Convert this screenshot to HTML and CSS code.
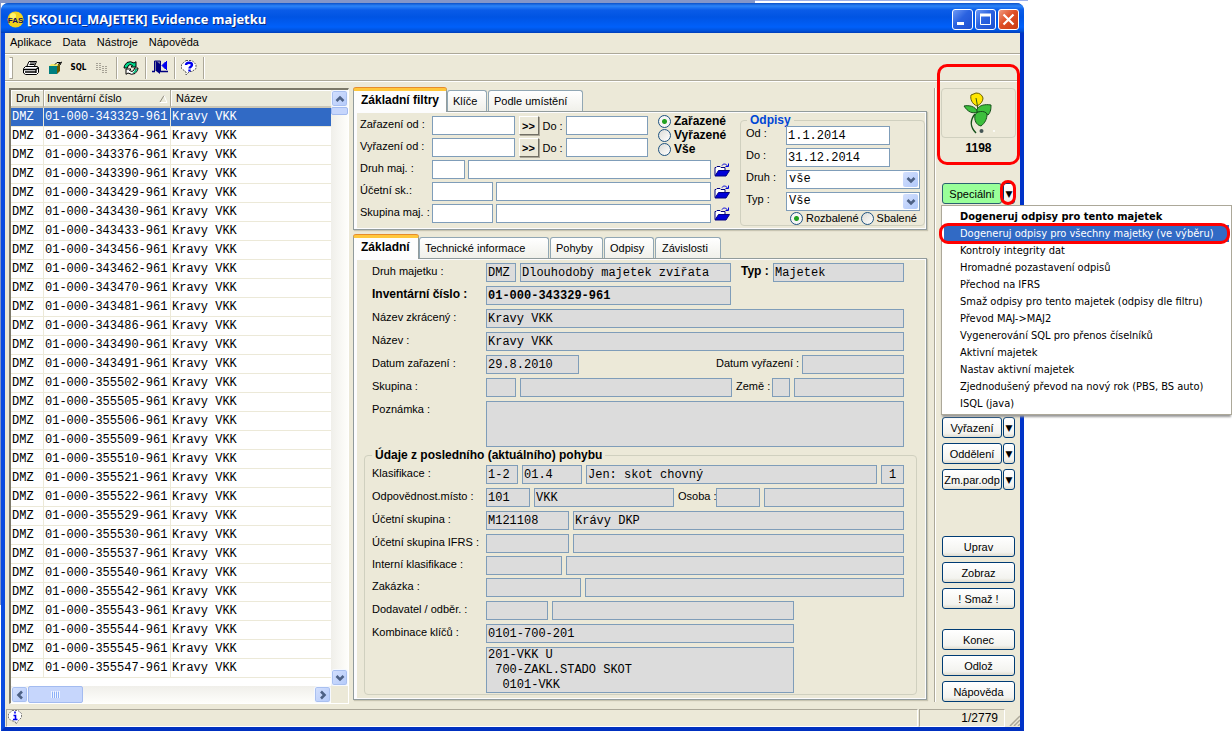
FILE: index.html
```html
<!DOCTYPE html>
<html lang="cs">
<head>
<meta charset="utf-8">
<title>[SKOLICI_MAJETEK] Evidence majetku</title>
<link rel="stylesheet" href="styles.css">
</head>
<body>
<svg class="defs" aria-hidden="true">
  <symbol id="folder" viewBox="0 0 16 14">
    <path d="M1 12.5V4.5h1l1-1h3l1 1h4v3" fill="#fff" stroke="#000080"/>
    <path d="M1 13L4.500 7.500H15.500L12 13Z" fill="#0000d8" stroke="#000080"/>
    <path d="M8 2.500C9 .5 12 .5 13.500 3M14.500 .5V3.500H11.500" fill="none" stroke="#0000d8"/>
  </symbol>
  <symbol id="down" viewBox="0 0 10 8"><path d="M1.500 2L5 5.500L8.500 2" fill="none" stroke="#4d6185" stroke-width="2.600"/></symbol>
</svg>
<div class="window">
  <header class="titlebar">
    <svg class="app-icon" viewBox="0 0 17 17"><circle cx="8.500" cy="8.500" r="8" fill="#f2d21c"/><circle cx="6" cy="5" r="3" fill="#fff36b"/><text x="8.500" y="12" text-anchor="middle" class="app-icon-text">FAS</text></svg>
    <h1>[SKOLICI_MAJETEK] Evidence majetku</h1>
    <button class="win-btn" aria-label="Minimalizovat"><svg viewBox="0 0 21 21"><path d="M5 14.500h7" stroke="#fff" stroke-width="3"/></svg></button>
    <button class="win-btn" aria-label="Maximalizovat"><svg viewBox="0 0 21 21"><path d="M5.500 5v10.500h10V5" fill="none" stroke="#fff"/><path d="M5 6h11" stroke="#fff" stroke-width="3"/></svg></button>
    <button class="win-btn close" aria-label="Zavřít"><svg viewBox="0 0 21 21"><path d="M5.500 5.500l10 10M15.500 5.500l-10 10" stroke="#fff" stroke-width="2.200"/></svg></button>
  </header>
  <nav class="menubar">
    <button>Aplikace</button><button>Data</button><button>Nástroje</button><button>Nápověda</button>
  </nav>
  <div class="toolbar">
    <span class="grip"></span>
    <button aria-label="Tisk"><svg width="18" height="16" viewBox="0 0 18 16"><path d="M5 6L7 1.500h7.500L12.500 6" fill="#fff" stroke="#000"/><path d="M8 3h5M7.500 4.500h5" stroke="#000"/><path d="M3.500 6.500h12l1 1.500v4.500l-2 2h-11L1.500 13V8.500Z" fill="#fff" stroke="#000"/><path d="M2 9.500h12v3.500M14 9.500l2.500-2M3 12h10.500" fill="none" stroke="#000" stroke-width="1.300"/></svg></button>
    <button aria-label="Export"><svg width="14" height="13" viewBox="0 0 14 13"><path d="M1 5L3.500 3H12L9 5Z" fill="#f5e96a"/><path d="M1 5h8v8H1Z" fill="#007f7f"/><path d="M9 5l3-2v7l-3 3Z" fill="#6b5a00"/><path d="M7 3.500l2-2h3M10 3.500L13.500 1 12 4" stroke="#000" fill="none"/></svg></button>
    <button class="sql">SQL</button>
    <button aria-label="Sloupce"><svg width="14" height="12" viewBox="0 0 14 12"><path d="M1 1.500h5M1 3.500h5M1 5.500h5M1 7.500h5M7 4.500h5M7 6.500h5M7 8.500h5M7 10.500h5" stroke="#a6a296"/><path d="M3.500 1v7M9.500 4v7" stroke="#ece9d8"/></svg></button>
    <span class="tsep"></span>
    <button aria-label="Obnovit"><svg width="16" height="14" viewBox="0 0 16 14"><path d="M1 7L1.500 4.500 4 1.500 7.500 .7 11 2 13 .7V6H8L9.500 4.500 7 3.500 5 5 4.500 7Z" fill="#00d58a" stroke="#000"/><path d="M15 7l-.5 2.500L12 12.500l-3.500.8L5 12l-2 1.300V8H8L6.500 9.500 9 10.500 11 9l.5-2Z" fill="#fff" stroke="#000"/><path d="M12 8h2.300l-.8 2.200-2 1.800H9.500L11.500 10Z" fill="#00b878"/></svg></button>
    <span class="tsep"></span>
    <button aria-label="Odejít"><svg width="16" height="15" viewBox="0 0 16 15"><path d="M2.500 11V1h6v10" fill="#8080a0" stroke="#000080"/><path d="M4 1l4 3v10l-4-3Z" fill="#000080"/><path d="M0 11.500h3M8 11.500h8" stroke="#000080" stroke-width="1.400"/><path d="M14.500 1v9M10 5.500l3.500-3.500v7Z" fill="#0000f0" stroke="#0000f0"/></svg></button>
    <span class="tsep"></span>
    <button aria-label="Nápověda"><svg width="16" height="16" viewBox="0 0 16 16"><path d="M5 .5h6l4 4v4l-4 3H8.500L5 15v-3L.5 8.500v-4Z" fill="#fff" stroke="#555" stroke-dasharray="2 1"/><path d="M5 5c0-3 6-3 6 0 0 1.600-2.500 1.800-2.500 3.500M8.500 9.500v2" fill="none" stroke="#0000f0" stroke-width="2.400"/></svg></button>
    <span class="tsep"></span>
  </div>

  <main class="main">
    <section class="list">
      <div class="rows">
        <table>
          <colgroup><col class="c-druh"><col class="c-inv"><col></colgroup>
          <thead><tr><th>Druh</th><th>Inventární číslo<svg class="sort" viewBox="0 0 9 8"><path d="M1 7L5 .5" stroke="#8c887a"/><path d="M5 .5L8 7.500H1" stroke="#fff" fill="none"/></svg></th><th>Název</th></tr></thead>
          <tbody>
            <tr class="selected"><td>DMZ</td><td>01-000-343329-961</td><td>Kravy VKK</td></tr>
            <tr><td>DMZ</td><td>01-000-343364-961</td><td>Kravy VKK</td></tr>
            <tr><td>DMZ</td><td>01-000-343376-961</td><td>Kravy VKK</td></tr>
            <tr><td>DMZ</td><td>01-000-343390-961</td><td>Kravy VKK</td></tr>
            <tr><td>DMZ</td><td>01-000-343429-961</td><td>Kravy VKK</td></tr>
            <tr><td>DMZ</td><td>01-000-343430-961</td><td>Kravy VKK</td></tr>
            <tr><td>DMZ</td><td>01-000-343433-961</td><td>Kravy VKK</td></tr>
            <tr><td>DMZ</td><td>01-000-343456-961</td><td>Kravy VKK</td></tr>
            <tr><td>DMZ</td><td>01-000-343462-961</td><td>Kravy VKK</td></tr>
            <tr><td>DMZ</td><td>01-000-343470-961</td><td>Kravy VKK</td></tr>
            <tr><td>DMZ</td><td>01-000-343481-961</td><td>Kravy VKK</td></tr>
            <tr><td>DMZ</td><td>01-000-343486-961</td><td>Kravy VKK</td></tr>
            <tr><td>DMZ</td><td>01-000-343490-961</td><td>Kravy VKK</td></tr>
            <tr><td>DMZ</td><td>01-000-343491-961</td><td>Kravy VKK</td></tr>
            <tr><td>DMZ</td><td>01-000-355502-961</td><td>Kravy VKK</td></tr>
            <tr><td>DMZ</td><td>01-000-355505-961</td><td>Kravy VKK</td></tr>
            <tr><td>DMZ</td><td>01-000-355506-961</td><td>Kravy VKK</td></tr>
            <tr><td>DMZ</td><td>01-000-355509-961</td><td>Kravy VKK</td></tr>
            <tr><td>DMZ</td><td>01-000-355510-961</td><td>Kravy VKK</td></tr>
            <tr><td>DMZ</td><td>01-000-355521-961</td><td>Kravy VKK</td></tr>
            <tr><td>DMZ</td><td>01-000-355522-961</td><td>Kravy VKK</td></tr>
            <tr><td>DMZ</td><td>01-000-355529-961</td><td>Kravy VKK</td></tr>
            <tr><td>DMZ</td><td>01-000-355530-961</td><td>Kravy VKK</td></tr>
            <tr><td>DMZ</td><td>01-000-355537-961</td><td>Kravy VKK</td></tr>
            <tr><td>DMZ</td><td>01-000-355540-961</td><td>Kravy VKK</td></tr>
            <tr><td>DMZ</td><td>01-000-355542-961</td><td>Kravy VKK</td></tr>
            <tr><td>DMZ</td><td>01-000-355543-961</td><td>Kravy VKK</td></tr>
            <tr><td>DMZ</td><td>01-000-355544-961</td><td>Kravy VKK</td></tr>
            <tr><td>DMZ</td><td>01-000-355545-961</td><td>Kravy VKK</td></tr>
            <tr><td>DMZ</td><td>01-000-355547-961</td><td>Kravy VKK</td></tr>
          </tbody>
        </table>
      </div>
      <div class="vscroll">
        <button class="sb" aria-label="Nahoru"><svg class="up" viewBox="0 0 10 8"><use href="#down"/></svg></button>
        <span class="vthumb"></span>
        <button class="sb end" aria-label="Dolů"><svg viewBox="0 0 10 8"><use href="#down"/></svg></button>
      </div>
      <div class="hscroll">
        <button class="sb" aria-label="Vlevo"><svg class="left" viewBox="0 0 10 8"><use href="#down"/></svg></button>
        <span class="hthumb"><svg width="9" height="7" viewBox="0 0 9 7"><path d="M.5 0v7M2.500 0v7M4.500 0v7M6.500 0v7M8.500 0v7" stroke="#eef4fe"/><path d="M1.500 1v6M3.500 1v6M5.500 1v6M7.500 1v6" stroke="#8cb0f8"/></svg></span>
        <button class="sb end" aria-label="Vpravo"><svg class="right" viewBox="0 0 10 8"><use href="#down"/></svg></button>
      </div>
      <div class="corner"></div>
    </section>

    <div class="center">
      <section class="tabpane">
        <div class="tabs" role="tablist">
          <button class="tab active t-filtry" role="tab">Základní filtry</button><button class="tab t-klice" role="tab">Klíče</button><button class="tab t-umisteni" role="tab">Podle umístění</button>
        </div>
        <form class="page filters">
          <div class="filter-left">
            <div class="dates-row">
              <div class="stack grow">
                <div class="row"><label class="flabel" for="zod">Zařazení od :</label><input id="zod" class="w83 grow"><button type="button" class="go" aria-label="Zařazení rozsah">&gt;&gt;</button><label class="do" for="zdo">Do :</label><input id="zdo" class="w83 grow"></div>
                <div class="row"><label class="flabel" for="vod">Vyřazení od :</label><input id="vod" class="w83 grow"><button type="button" class="go" aria-label="Vyřazení rozsah">&gt;&gt;</button><label class="do" for="vdo">Do :</label><input id="vdo" class="w83 grow"></div>
              </div>
              <div class="states">
                <label><input type="radio" name="stav" checked>Zařazené</label>
                <label><input type="radio" name="stav">Vyřazené</label>
                <label><input type="radio" name="stav">Vše</label>
              </div>
            </div>
            <div class="row"><label class="flabel" for="dm">Druh maj. :</label><input id="dm" class="w33"><input class="grow" aria-label="Název druhu"><button type="button" class="pick" aria-label="Vybrat druh"><svg width="16" height="14"><use href="#folder"/></svg></button></div>
            <div class="row"><label class="flabel" for="us">Účetní sk.:</label><input id="us" class="w61"><input class="grow" aria-label="Název účetní skupiny"><button type="button" class="pick" aria-label="Vybrat účetní skupinu"><svg width="16" height="14"><use href="#folder"/></svg></button></div>
            <div class="row"><label class="flabel" for="sm">Skupina maj. :</label><input id="sm" class="w61"><input class="grow" aria-label="Název skupiny"><button type="button" class="pick" aria-label="Vybrat skupinu"><svg width="16" height="14"><use href="#folder"/></svg></button></div>
          </div>
          <fieldset class="group odpisy">
            <legend>Odpisy</legend>
            <div class="row"><label for="ood">Od :</label><input id="ood" class="w104" value="1.1.2014"></div>
            <div class="row"><label for="odo">Do :</label><input id="odo" class="w104" value="31.12.2014"></div>
            <div class="row"><label for="odr">Druh :</label><span class="combo"><select id="odr"><option>vše</option></select><i><svg viewBox="0 0 10 8"><use href="#down"/></svg></i></span></div>
            <div class="row"><label for="oty">Typ :</label><span class="combo"><select id="oty"><option>Vše</option></select><i><svg viewBox="0 0 10 8"><use href="#down"/></svg></i></span></div>
            <div class="views"><label><input type="radio" name="zob" checked>Rozbalené</label><label><input type="radio" name="zob">Sbalené</label></div>
          </fieldset>
        </form>
      </section>

      <section class="tabpane detail-pane">
        <div class="tabs" role="tablist">
          <button class="tab active t-zakladni" role="tab">Základní</button><button class="tab t-tech" role="tab">Technické informace</button><button class="tab t-pohyby" role="tab">Pohyby</button><button class="tab t-odpisy" role="tab">Odpisy</button><button class="tab t-zav" role="tab">Závislosti</button>
        </div>
        <form class="page detail">
          <div class="rows-main">
            <div class="row"><label for="a1">Druh majetku :</label><input readonly id="a1" class="w30" value="DMZ"><input readonly class="grow" aria-label="Název druhu majetku" value="Dlouhodobý majetek zvířata"><label class="mid strong" for="a2">Typ :</label><input readonly id="a2" class="w131" value="Majetek"></div>
            <div class="row"><label class="strong" for="a3">Inventární číslo :</label><input readonly id="a3" class="w245 bold" value="01-000-343329-961"></div>
            <div class="row"><label for="a4">Název zkrácený :</label><input readonly id="a4" class="grow" value="Kravy VKK"></div>
            <div class="row"><label for="a5">Název :</label><input readonly id="a5" class="grow" value="Kravy VKK"></div>
            <div class="row"><label for="a6">Datum zařazení :</label><input readonly id="a6" class="w93" value="29.8.2010"><label class="mid push" for="a7">Datum vyřazení :</label><input readonly id="a7" class="w102"></div>
            <div class="row"><label for="a8">Skupina :</label><input readonly id="a8" class="w30"><input readonly class="grow" aria-label="Název skupiny"><label class="mid near" for="a9">Země :</label><input readonly id="a9" class="w18"><input readonly class="w110" aria-label="Název země"></div>
            <div class="row"><label for="a10">Poznámka :</label><textarea readonly id="a10" class="grow"></textarea></div>
          </div>
          <fieldset class="group last-move">
            <legend>Údaje z posledního (aktuálního) pohybu</legend>
            <div class="row"><label for="b1">Klasifikace :</label><input readonly id="b1" class="w32" value="1-2"><input readonly class="w60" aria-label="Kód" value="01.4"><input readonly class="grow" aria-label="Popis" value="Jen: skot chovný"><input readonly class="w23 mid-text" aria-label="Skupina odpisu" value="1"></div>
            <div class="row"><label for="b2">Odpovědnost.místo :</label><input readonly id="b2" class="w44" value="101"><input readonly class="w142 grow" aria-label="Místo" value="VKK"><label class="mid osoba" for="b3">Osoba :</label><input readonly id="b3" class="w44"><input readonly class="w142 grow" aria-label="Jméno osoby"></div>
            <div class="row"><label for="b4">Účetní skupina :</label><input readonly id="b4" class="w83" value="M121108"><input readonly class="grow" aria-label="Název účetní skupiny" value="Krávy DKP"></div>
            <div class="row"><label for="b5">Účetní skupina IFRS :</label><input readonly id="b5" class="w83"><input readonly class="grow" aria-label="Název skupiny IFRS"></div>
            <div class="row tight"><label for="b6">Interní klasifikace :</label><input readonly id="b6" class="w76"><input readonly class="grow" aria-label="Název interní klasifikace"></div>
            <div class="row tight"><label for="b7">Zakázka :</label><input readonly id="b7" class="w95"><input readonly class="grow" aria-label="Název zakázky"></div>
            <div class="row"><label for="b8">Dodavatel / odběr. :</label><input readonly id="b8" class="w62"><input readonly class="w242" aria-label="Název dodavatele"></div>
            <div class="row"><label for="b9">Kombinace klíčů :</label><input readonly id="b9" class="w308" value="0101-700-201"></div>
            <div class="row"><label for="b10"></label><textarea readonly id="b10" class="w308" aria-label="Rozpis klíčů">201-VKK U
 700-ZAKL.STADO SKOT
  0101-VKK</textarea></div>
          </fieldset>
        </form>
      </section>
    </div>

    <div class="divider"></div>

    <aside class="side">
      <div class="brand">
        <div class="brand-box"><svg width="32" height="44" viewBox="0 0 32 44">
          <path d="M14 15C9 13 7 8 8 4l5-2c4 0 6 2 7 5 0 3-2 6-6 8Z" fill="#ffe600" stroke="#6b6000"/>
          <path d="M13 7l1.500 8v5" fill="none" stroke="#3c5a10"/>
          <path d="M1 15c5-1 11 0 14 6-6 2-10 0-14-6Z" fill="#3cbf3c" stroke="#15501a"/>
          <path d="M14 18c3-4 8-5 14-4 0 3 0 7-3 10-4-2-7-3-11-3Z" fill="#3cbf3c" stroke="#15501a"/>
          <path d="M12 24c1-4 10-5 12-1 0 5-2 9-6 12-5-1-7-6-6-11Z" fill="#3cbf3c" stroke="#15501a"/>
          <path d="M12 23c-5 6-5 13 1 19" fill="none" stroke="#15501a" stroke-width="1.500"/>
          <circle cx="18.500" cy="40" r="2" fill="#455"/><circle cx="31" cy="40" r="1" fill="#fff"/>
        </svg></div>
        <strong>1198</strong>
        <span class="mark mark-brand"></span>
      </div>
      <div class="split special"><button class="btn green">Speciální</button><button class="btn arrow" aria-label="Speciální – nabídka">▼</button><span class="mark mark-arrow"></span>
        <div class="popup" role="menu">
          <button class="strong-item" role="menuitem">Dogeneruj odpisy pro tento majetek</button>
          <button class="hot" role="menuitem">Dogeneruj odpisy pro všechny majetky (ve výběru)<span class="mark mark-item"></span></button>
          <button role="menuitem">Kontroly integrity dat</button>
          <button role="menuitem">Hromadné pozastavení odpisů</button>
          <button role="menuitem">Přechod na IFRS</button>
          <button role="menuitem">Smaž odpisy pro tento majetek (odpisy dle filtru)</button>
          <button role="menuitem">Převod MAJ-&gt;MAJ2</button>
          <button role="menuitem">Vygenerování SQL pro přenos číselníků</button>
          <button role="menuitem">Aktivní majetek</button>
          <button role="menuitem">Nastav aktivní majetek</button>
          <button role="menuitem">Zjednodušený převod na nový rok (PBS, BS auto)</button>
          <button role="menuitem">ISQL (java)</button>
        </div>
      </div>
      <div class="btn-group">
        <div class="split"><button class="btn">Vyřazení</button><button class="btn arrow" aria-label="Vyřazení – nabídka">▼</button></div>
        <div class="split"><button class="btn">Oddělení</button><button class="btn arrow" aria-label="Oddělení – nabídka">▼</button></div>
        <div class="split"><button class="btn">Zm.par.odp</button><button class="btn arrow" aria-label="Změna parametrů – nabídka">▼</button></div>
      </div>
      <div class="btn-group edit-group"><button class="btn">Uprav</button><button class="btn">Zobraz</button><button class="btn">! Smaž !</button></div>
      <div class="btn-group exit-group"><button class="btn">Konec</button><button class="btn">Odlož</button><button class="btn">Nápověda</button></div>
    </aside>
  </main>

  <footer class="statusbar">
    <div class="status-main"><svg width="15" height="15" viewBox="0 0 15 15"><path d="M4 .5h6l3.500 3v4l-3 3L8 14l-1-2.500L3 10.500.5 8V4Z" fill="#fff" stroke="#777" stroke-dasharray="2 1"/><path d="M7 1.500v2M5.500 5.500h2v4M5 9.500h4.500" fill="none" stroke="#0000f0" stroke-width="1.600"/></svg></div>
    <div class="status-count">1/2779</div>
    <svg class="resize" viewBox="0 0 12 12"><path d="M2 12L12 2M6 12l6-6M10 12l2-2" stroke="#aca899" stroke-width="1.500"/></svg>
  </footer>
</div>
</body>
</html>
```
FILE: styles.css
```css
* { box-sizing: border-box; }

body {
  margin: 0;
  min-height: 100vh;
  padding: 3px 208px 21px 1px;
  display: flex;
  font: 11px/14px "Liberation Sans", Arial, sans-serif;
  color: #000;
  background:
    linear-gradient(#8496c8, #8496c8) 0 0 / 755px 3px no-repeat,
    linear-gradient(#9db0e8, #9db0e8) 0 0 / 1028px 1px no-repeat,
    linear-gradient(#8496c8, #8496c8) 0 0 / 1px 605px no-repeat,
    #fff;
}

button, input, select, textarea { font: inherit; color: inherit; margin: 0; border-radius: 0; }
button { border: 0; padding: 0; background: none; white-space: nowrap; }
.defs { position: absolute; width: 0; height: 0; }

.window {
  flex: 1;
  display: flex;
  flex-direction: column;
  min-width: 0;
  border: 4px solid #0a4be0;
  border-top: 0;
  border-right-color: #0033c8;
  border-bottom-color: #0030c0;
  border-radius: 8px 8px 0 0;
  background: #ece9d8;
}

/* Title bar */
.titlebar {
  margin: 0 -4px;
  height: 30px;
  padding: 2px 5px 0 6px;
  display: flex;
  align-items: center;
  gap: 2px;
  border-radius: 7px 7px 0 0;
  background: linear-gradient(#0a50c8, #2c84f8 3px, #0a5ce8 7px, #0054e3 14px, #0060fa 24px, #0050d8 28px, #003cb8);
}
.titlebar h1 {
  flex: 1;
  margin: 0 0 0 1px;
  font: bold 13px/18px "Open Sans", sans-serif;
  color: #fff;
  text-shadow: 1px 1px #0a2a80;
  white-space: nowrap;
}
.app-icon { width: 17px; height: 17px; }
.app-icon-text { font: bold 8px "Liberation Sans", sans-serif; fill: #101060; }
.win-btn {
  width: 21px;
  height: 21px;
  border: 1px solid #fff;
  border-radius: 3px;
  background: linear-gradient(135deg, #6f9af5, #2a62e0 45%, #1d4fd0);
}
.win-btn svg { display: block; margin: -1px; width: 21px; height: 21px; }
.win-btn.close { background: linear-gradient(135deg, #f09a80, #df4f26 45%, #c83c14); }

/* Menu and toolbar */
.menubar { display: flex; gap: 11px; height: 21px; padding: 0 5px 2px; border-bottom: 1px solid #aca899; }
.toolbar { display: flex; align-items: center; height: 27px; padding-left: 4px; border-top: 1px solid #fff; border-bottom: 1px solid #aca899; }
.toolbar button { height: 22px; display: flex; align-items: center; justify-content: center; width: 24px; }
.toolbar button svg { display: block; }
.toolbar .sql { width: 23px; font: bold 8px/10px "DejaVu Sans Condensed", sans-serif; }
.grip { width: 4px; height: 22px; margin-right: 6px; border: 1px solid #aca899; border-left-color: #fff; background: #fff; }
.tsep { width: 2px; height: 22px; margin: 0 1px 0 2px; border-left: 1px solid #aca899; border-right: 1px solid #fff; }

/* Main area */
.main { flex: 1; display: flex; padding: 6px 5px 5px 4px; border-top: 1px solid #fff; }
.center { flex: 1; min-width: 0; margin: 0 7px 0 4px; display: flex; flex-direction: column; gap: 5px; padding-bottom: 4px; }
.divider { width: 2px; margin: 0 6px 2px 0; border-left: 1px solid #aca899; border-right: 1px solid #fff; }

/* Asset list */
.list {
  width: 340px;
  display: grid;
  grid-template: 1fr 17px / 1fr 17px;
  border: 1px solid #fff;
  border-top: 2px solid #7c796a;
  border-left: 2px solid #7c796a;
  background: #ece9d8;
}
.rows { background: #fff; overflow: hidden; }
.rows table { width: 100%; border-collapse: separate; border-spacing: 0; table-layout: fixed; }
.c-druh { width: 33px; }
.c-inv { width: 127px; }
.rows th {
  height: 18px;
  padding: 0 3px;
  font-weight: normal;
  text-align: left;
  background: #ebeadb;
  border-right: 1px solid #aca899;
  border-bottom: 2px solid #cbc7b8;
  box-shadow: inset 1px 1px #fff;
  position: relative;
  white-space: nowrap;
}
.rows th:first-child { padding-left: 5px; }
.rows th:last-child { border-right: 0; padding-left: 5px; }
.sort { position: absolute; right: 2px; top: 5px; width: 9px; height: 8px; }
.rows td {
  height: 19px;
  padding: 0 0 0 1px;
  font: 12px/16px "Liberation Mono", "Courier New", monospace;
  border-right: 1px solid #ece9d8;
  border-bottom: 1px solid #ece9d8;
  white-space: nowrap;
}
.rows td:last-child { border-right: 0; }
.selected td { background: #316ac5; color: #fff; }
.vscroll { display: flex; flex-direction: column; background: linear-gradient(90deg, #f0efea, #fefefb); }
.hscroll { display: flex; background: linear-gradient(#f0efea, #fefefb); }
.sb {
  width: 17px;
  height: 17px;
  flex: none;
  display: grid;
  place-items: center;
  border: 1px solid #f6f9ff;
  border-radius: 3px;
  background: linear-gradient(135deg, #d4e0fd, #b4cafa);
  box-shadow: inset 0 0 0 1px #a9c0f0;
}
.sb svg { width: 10px; height: 8px; display: block; }
.sb.end { margin-top: auto; }
.hscroll .sb.end { margin: 0 0 0 auto; }
.up { transform: rotate(180deg); }
.left { transform: rotate(90deg); }
.right { transform: rotate(-90deg); }
.vthumb { height: 8px; border: 1px solid #a3bbf0; border-radius: 2px; background: #c6d6fc; }
.hthumb { width: 55px; display: grid; place-items: center; border: 1px solid #a3bbf0; border-radius: 2px; background: #c6d6fc; }

/* Tab panes */
.tabpane { display: flex; flex-direction: column; }
.detail-pane { flex: 1; }
.tabs { display: flex; align-items: flex-end; height: 23px; }
.tab {
  height: 21px;
  margin-right: 1px;
  padding-left: 5px;
  text-align: left;
  border: 1px solid #91a7b4;
  border-bottom: 0;
  border-radius: 3px 3px 0 0;
  background: linear-gradient(#fff, #f0f0ea);
}
.tab.active {
  height: 24px;
  margin: 0 0 -1px;
  padding: 0 0 3px 7px;
  border: 1px solid #919b9c;
  border-top: 3px solid #ffc73c;
  border-bottom: 0;
  background: #fdfdfd;
  font-weight: bold;
  font-size: 12px;
  position: relative;
  box-shadow: 0 -1px #e68b2c;
}
.t-filtry { width: 94px; }
.t-klice { width: 40px; }
.t-umisteni { width: 95px; }
.t-zakladni { width: 66px; }
.t-tech { width: 130px; }
.t-pohyby { width: 53px; }
.t-odpisy { width: 50px; }
.t-zav { width: 66px; padding-left: 6px; }
.page {
  border: 1px solid #919b9c;
  outline: 0;
  box-shadow: inset 0 0 0 1px #fcfcfe, inset 3px 0 #fcfcfe, 1px 1px 1px #c8c5b2;
}
.row { display: flex; gap: 4px; align-items: flex-start; }
.grow { flex: 1 1 0; min-width: 0; }
input:not([type]), textarea, select {
  height: 19px;
  padding: 0 1px;
  border: 1px solid #7f9db9;
  background: #fff;
  font: 12px/15px "Liberation Mono", "Courier New", monospace;
}
input[readonly], textarea[readonly] { background: #dcdcdc; }
textarea { height: 46px; resize: none; overflow: hidden; display: block; }
.strong { font-weight: bold; font-size: 12px; }
input.bold { font-weight: bold; }
input.mid-text { text-align: center; }

.w18 { width: 18px; } .w23 { width: 23px; } .w30 { width: 30px; } .w32 { width: 32px; }
.w33 { width: 33px; } .w44 { width: 44px; } .w60 { width: 60px; } .w61 { width: 61px; }
.w62 { width: 62px; } .w76 { width: 76px; } .w83 { width: 83px; } .w93 { width: 93px; }
.w95 { width: 95px; } .w102 { width: 102px; } .w104 { width: 104px; } .w110 { width: 110px; }
.w131 { width: 131px; } .w142 { width: 142px; } .w242 { width: 242px; } .w245 { width: 245px; }
.w308 { width: 308px; }

input[type="radio"] {
  appearance: none;
  flex: none;
  width: 13px;
  height: 13px;
  margin: 0 3px 0 0;
  border: 1px solid #1d5281;
  border-radius: 50%;
  background: linear-gradient(135deg, #dcdcd7, #fff);
}
input[type="radio"]:checked { background: radial-gradient(circle, #21a121 0 2px, #f6f6f4 3px); }

/* Filters */
.filters { display: flex; padding: 4px 1px 3px 6px; }
.filter-left { flex: 1; display: flex; flex-direction: column; gap: 3px; min-width: 0; }
.filter-left .row { gap: 3px; }
.stack { display: flex; flex-direction: column; gap: 3px; }
.flabel { width: 69px; flex: none; padding-top: 1px; white-space: nowrap; }
.go {
  width: 20px;
  height: 19px;
  margin: 0 1px;
  font-weight: bold;
  background: #ece9d8;
  border: 1px solid #fff;
  border-right: 1px solid #716f64;
  border-bottom: 1px solid #716f64;
  box-shadow: 1px 1px #aca899;
}
.do { width: 20px; padding-top: 3px; white-space: nowrap; }
.dates-row { display: flex; gap: 10px; }
.states { width: 82px; margin: -2px 0; display: flex; flex-direction: column; }
.states label { display: flex; align-items: center; font-weight: bold; font-size: 12px; }
.pick { width: 16px; height: 19px; margin-right: 10px; }
.pick svg { display: block; }

.group { margin: 0; padding: 0; border: 1px solid #d0d0bf; border-radius: 4px; min-width: 0; }
.group legend { font-weight: bold; font-size: 12px; line-height: 14px; padding: 0 3px; }
.odpisy { width: 185px; margin-top: -2px; padding: 0 5px; }
.odpisy legend { margin-left: 1px; color: #0046d5; line-height: 12px; }
.odpisy .row { gap: 0; margin-bottom: 3px; }
.odpisy .row label { width: 40px; }
.combo { flex: 1; position: relative; display: block; height: 19px; margin-right: -1px; }
.combo select { width: 100%; appearance: none; padding: 0 2px; display: block; }
.combo i {
  position: absolute;
  right: 2px;
  top: 2px;
  width: 15px;
  height: 15px;
  display: grid;
  place-items: center;
  border-radius: 2px;
  background: linear-gradient(135deg, #d4e0fd, #b0c8fa);
  pointer-events: none;
}
.combo svg { width: 10px; height: 8px; }
.views { display: flex; gap: 2px; margin-top: -2px; padding-left: 44px; line-height: 13px; }
.views label { display: flex; align-items: center; white-space: nowrap; }

/* Detail */
.detail { flex: 1; padding: 4px 9px 4px 10px; }
.rows-main { padding: 0 13px 0 8px; }
.detail .row { margin-top: 4px; }
.detail .row.tight { margin-top: 3px; }
.detail .rows-main .row:first-child { margin-top: 0; }
.detail label { width: 110px; flex: none; padding-top: 1px; white-space: nowrap; }
.detail .mid { width: 34px; padding-left: 6px; }
.detail .mid.push { width: 82px; margin-left: auto; padding-left: 0; }
.detail .mid.near { width: 32px; padding-left: 0; }
.detail .mid.osoba { width: 34px; padding-left: 0; }
.last-move { margin-top: 1px; padding: 0 12px 1px 7px; }
.last-move legend { margin-left: 0; }
.last-move .row:nth-child(2) { margin-top: 3px; }

/* Right-hand buttons */
.side { width: 73px; flex: none; display: flex; flex-direction: column; }
.brand { position: relative; height: 76px; margin-bottom: 19px; display: flex; flex-direction: column; align-items: center; }
.brand-box { align-self: stretch; height: 50px; margin: 0 -1px 3px; display: grid; place-items: center; border: 1px solid #d0d0bf; border-radius: 4px; }
.brand-box svg { display: block; }
.brand strong { font: bold 12px/14px "Liberation Sans", Arial, sans-serif; }
.split { position: relative; display: flex; gap: 1px; }
.btn {
  flex: 1;
  min-height: 21px;
  border: 1px solid #003c74;
  border-radius: 3px;
  background: linear-gradient(#fff, #f3f3ef 80%, #e0ddd0);
}
.btn.green { background: #99ff99; border-color: #2a6070; }
.btn.arrow { flex: none; width: 12px; font: 9px/10px "DejaVu Sans", sans-serif; text-align: center; }
.btn-group { display: flex; flex-direction: column; gap: 5px; }
.special { margin-bottom: 213px; }
.edit-group { margin-top: 46px; }
.exit-group { margin-top: 20px; }

.mark { position: absolute; border: 3px solid #f00; pointer-events: none; }
.mark-brand { inset: -24px -5px -1px; border-radius: 10px; }
.mark-arrow { top: -3px; right: -1px; width: 16px; height: 25px; border-radius: 8px; }
.mark-item { inset: -2px -1px -2px -5px; border-radius: 9px; }

.popup {
  position: absolute;
  z-index: 2;
  left: -1px;
  top: 22px;
  width: 291px;
  padding: 2px;
  border: 1px solid #aca899;
  background: #fff;
  box-shadow: 0 3px 2px -1px #999;
  font: 11px/17px "DejaVu Sans Condensed", Tahoma, sans-serif;
}
.popup button { display: block; position: relative; width: 100%; height: 17px; padding-left: 16px; text-align: left; }
.popup .strong-item { font-weight: bold; }
.popup .hot { background: #316ac5; color: #fff; }

/* Status bar */
.statusbar { height: 18px; display: flex; gap: 1px; padding-left: 1px; }
.status-main, .status-count { border-top: 1px solid #aca899; border-left: 1px solid #aca899; border-right: 1px solid #fff; border-bottom: 1px solid #fff; }
.status-main { flex: 1; padding-left: 1px; }
.status-main svg { display: block; }
.status-count { width: 86px; padding: 1px 6px 0 0; text-align: right; font-size: 12px; }
.resize { width: 12px; height: 12px; margin: 5px 0 0 2px; }
```
